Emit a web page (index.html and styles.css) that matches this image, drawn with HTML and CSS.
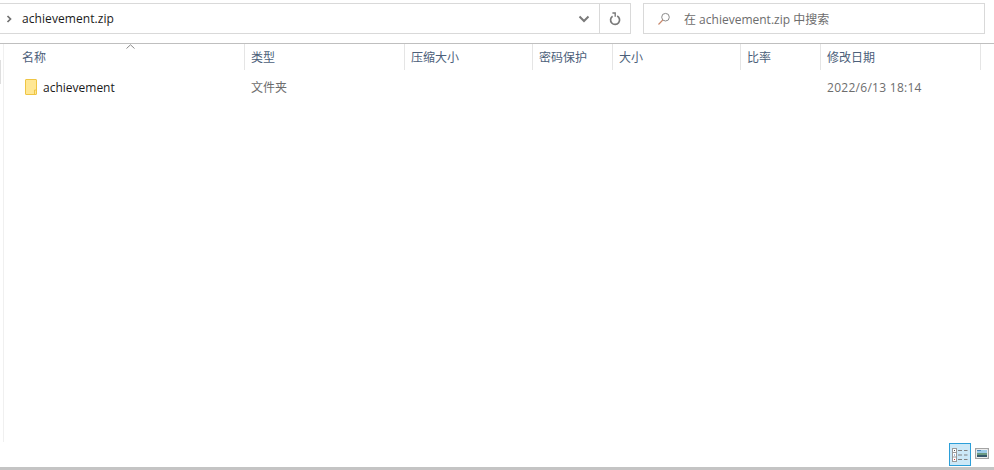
FILE: index.html
```html
<!DOCTYPE html>
<html lang="zh-CN">
<head>
<meta charset="utf-8">
<title>achievement.zip</title>
<link rel="stylesheet" href="styles.css">
</head>
<body>
<div class="scroll-thumb"></div>
<div class="toolbar">
  <div class="address">
    <svg class="crumb" width="6" height="8" viewBox="0 0 6 8"><path d="M1.5 1 L4.5 4 L1.5 7" fill="none" stroke="#707070" stroke-width="1.7"/></svg>
    <span class="path">achievement.zip</span>
    <svg class="chev" width="12" height="8" viewBox="0 0 12 8"><path d="M1.5 1.5 L6 6 L10.5 1.5" fill="none" stroke="#7a7a7a" stroke-width="2"/></svg>
    <div class="refresh">
      <svg width="12" height="14" viewBox="0 0 12 14"><path d="M3.6 4.2 A4.5 4.5 0 1 0 8.2 4" fill="none" stroke="#7a7a7a" stroke-width="1.7"/><path d="M3.4 1 L6.2 1 L6.2 4.8" fill="none" stroke="#7a7a7a" stroke-width="1.4"/></svg>
    </div>
  </div>
  <div class="search">
    <svg width="14" height="14" viewBox="0 0 14 14"><circle cx="8.5" cy="5.2" r="3.8" fill="none" stroke="#8a8a8a" stroke-width="1"/><path d="M5.8 8 L1.5 12.5" stroke="#c8876a" stroke-width="1.1"/></svg>
    <span>在 achievement.zip 中搜索</span>
  </div>
</div>
<div class="pane">
  <div class="sort-arrow"><svg width="9" height="5" viewBox="0 0 9 5"><path d="M0.5 4.5 L4.5 0.8 L8.5 4.5" fill="none" stroke="#8a8a8a" stroke-width="1"/></svg></div>
  <div class="columns head">
    <div class="col first">名称</div>
    <div class="col">类型</div>
    <div class="col">压缩大小</div>
    <div class="col">密码保护</div>
    <div class="col">大小</div>
    <div class="col">比率</div>
    <div class="col">修改日期</div>
  </div>
  <div class="columns row">
    <div class="cell name">
      <svg width="12" height="16" viewBox="0 0 12 16"><rect x="0.5" y="0.5" width="11" height="15" rx="0.5" fill="#ffe794" stroke="#efc544"/><path d="M9.5 15.5 V11 H11.5" fill="none" stroke="#efc544"/></svg>
      <span>achievement</span>
    </div>
    <div class="cell">文件夹</div>
    <div class="cell"></div>
    <div class="cell"></div>
    <div class="cell"></div>
    <div class="cell"></div>
    <div class="cell date">2022/6/13 18:14</div>
  </div>
</div>
<div class="status">
  <div class="view active">
    <svg width="16" height="14" viewBox="0 0 16 14">
      <rect x="0.5" y="0.5" width="4" height="13" fill="#fff" stroke="#999"/>
      <path d="M0.5 4.5 H4.5 M0.5 9 H4.5" stroke="#999"/>
      <rect x="2" y="2" width="1" height="1" fill="#555"/><rect x="2" y="6.5" width="1" height="1" fill="#3b7fc4"/><rect x="2" y="11" width="1" height="1" fill="#c33"/>
      <path d="M6 2.5 H10 M12 2.5 H15.5 M6 7 H10 M12 7 H15.5 M6 11.5 H10 M12 11.5 H15.5" stroke="#808080"/>
    </svg>
  </div>
  <svg class="thumb" width="14" height="11" viewBox="0 0 14 11">
    <rect x="0.6" y="0.6" width="12.8" height="9.8" fill="#fff" stroke="#a3a3a3" stroke-width="1.2"/>
    <rect x="2" y="2" width="10" height="3" fill="#9ccbe8"/>
    <rect x="2" y="2" width="4" height="1" fill="#4d86b5"/>
    <rect x="2" y="5" width="10" height="2" fill="#6b9a82"/>
    <rect x="2" y="7" width="10" height="2" fill="#35596b"/>
  </svg>
</div>
<div class="bottom"></div>
</body>
</html>
```
FILE: styles.css
```css
* { box-sizing: border-box; }
html, body { margin: 0; height: 100%; }
body {
  width: 994px;
  height: 470px;
  overflow: hidden;
  background: #fff;
  display: flex;
  flex-direction: column;
  position: relative;
  font-family: "Open Sans", "Noto Sans CJK SC", sans-serif;
  font-size: 12px;
  color: #1a1a1a;
}
.scroll-thumb {
  position: absolute;
  left: 0;
  top: 60px;
  width: 1px;
  height: 24px;
  background: #dedede;
}
.toolbar {
  height: 44px;
  padding: 3px 9px 0 0;
  display: flex;
  align-items: flex-start;
  gap: 12px;
  border-bottom: 1px solid #bfbfbf;
  flex: none;
}
.address {
  width: 631px;
  height: 31px;
  border: 1px solid #d9d9d9;
  border-left: 0;
  display: flex;
  align-items: center;
  padding-left: 6px;
}
.path { margin-left: 10px; flex: 1; letter-spacing: 0.07px; }
.chev { margin-right: 9px; }
.refresh {
  width: 31px;
  height: 100%;
  border-left: 1px solid #d9d9d9;
  display: flex;
  align-items: center;
  justify-content: center;
}
.search {
  width: 342px;
  height: 31px;
  border: 1px solid #d9d9d9;
  display: flex;
  align-items: center;
  padding-left: 13px;
  gap: 13px;
  color: #6d6d6d;
}
.pane {
  flex: 1;
  margin-left: 3px;
  border-left: 1px solid #f0f0f0;
  position: relative;
  min-height: 0;
}
.sort-arrow {
  position: absolute;
  left: 122px;
  top: 0;
  line-height: 0;
}
.columns {
  display: grid;
  grid-template-columns: 241px 160px 128px 80px 128px 80px 160px;
}
.head { height: 26px; }
.col {
  height: 26px;
  padding: 5px 0 0 6px;
  border-right: 1px solid #e5e5e5;
  color: #4c607a;
  line-height: 17px;
}
.col.first { padding-left: 18px; }
.row { height: 34px; }
.cell {
  padding-left: 6px;
  color: #6d6d6d;
  display: flex;
  align-items: center;
  height: 34px;
}
.date { letter-spacing: 0.28px; }
.name {
  padding-left: 21px;
  gap: 6px;
  color: #1a1a1a;
}
.status {
  flex: none;
  height: 25px;
  display: flex;
  justify-content: flex-end;
  align-items: flex-start;
  padding: 1px 5px 0 0;
  gap: 4px;
}
.view {
  width: 22px;
  height: 23px;
  display: flex;
  align-items: center;
  justify-content: center;
}
.view.active {
  background: #cce8f7;
  border: 1px solid #2b9fd9;
}
.thumb { margin-top: 5px; }
.bottom {
  flex: none;
  height: 3px;
  background: #c4c4c4;
}
```
